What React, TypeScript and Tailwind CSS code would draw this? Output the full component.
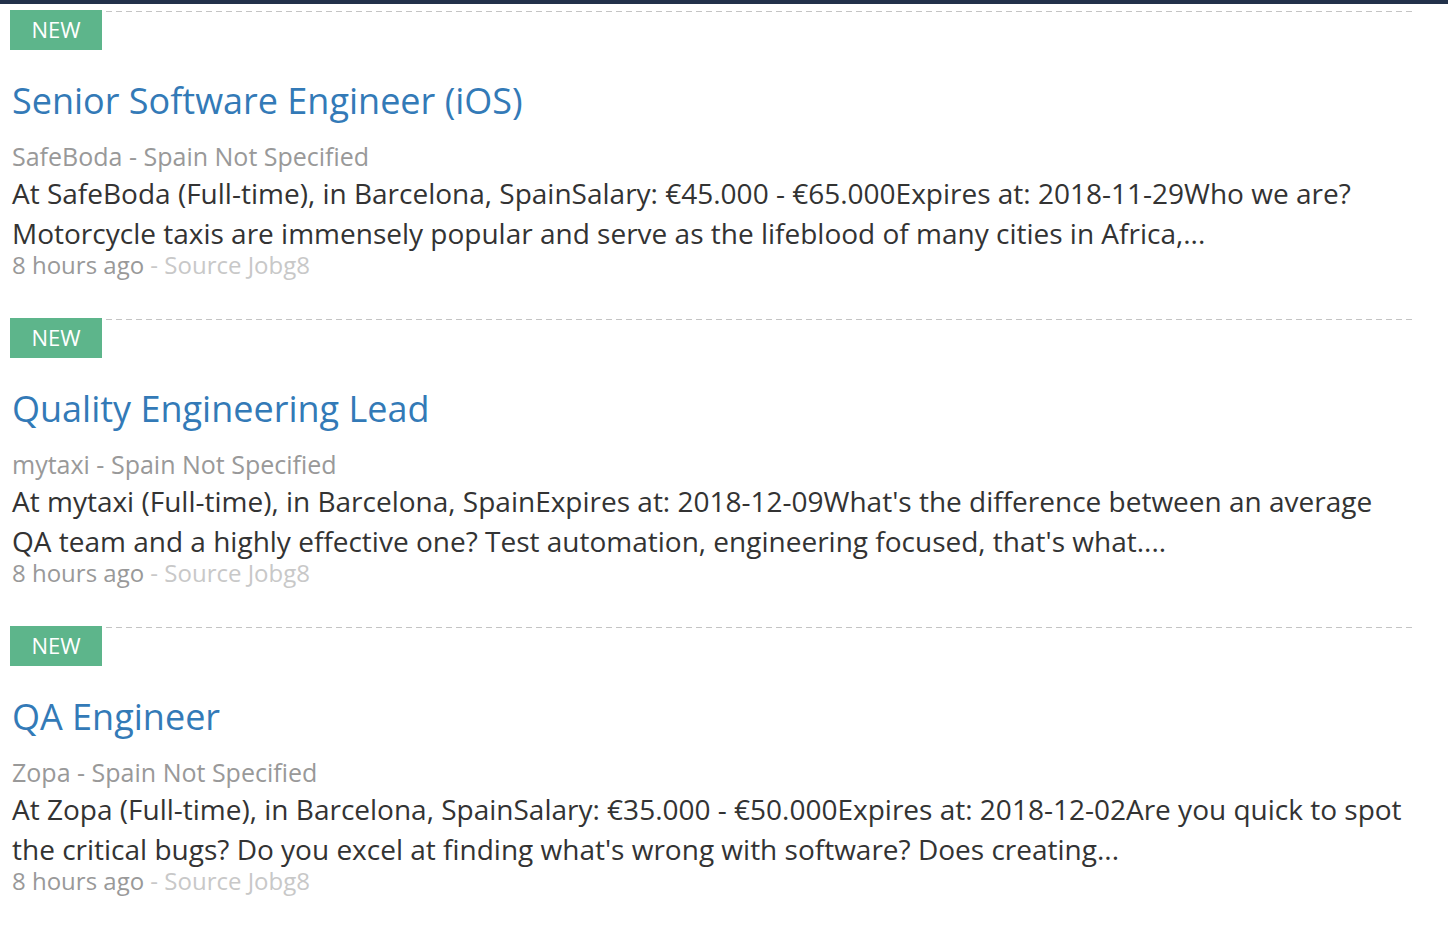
const jobs = [
  {
    title: "Senior Software Engineer (iOS)",
    company: "SafeBoda",
    location: "Spain Not Specified",
    summary:
      "At SafeBoda (Full-time), in Barcelona, SpainSalary: €45.000 - €65.000Expires at: 2018-11-29Who we are? Motorcycle taxis are immensely popular and serve as the lifeblood of many cities in Africa,...",
  },
  {
    title: "Quality Engineering Lead",
    company: "mytaxi",
    location: "Spain Not Specified",
    summary:
      "At mytaxi (Full-time), in Barcelona, SpainExpires at: 2018-12-09What's the difference between an average QA team and a highly effective one? Test automation, engineering focused, that's what....",
  },
  {
    title: "QA Engineer",
    company: "Zopa",
    location: "Spain Not Specified",
    summary:
      "At Zopa (Full-time), in Barcelona, SpainSalary: €35.000 - €50.000Expires at: 2018-12-02Are you quick to spot the critical bugs? Do you excel at finding what's wrong with software? Does creating...",
  },
];

export default function App() {
  return (
    <div className="min-h-[934px] bg-white font-['Open_Sans',sans-serif]">
      <div className="h-[4px] bg-[#22314a]" />
      <div className="w-[1402px] ml-[10px] pt-[6px]">
        {jobs.map((job) => (
          <div key={job.title} className="mb-[41px]">
            <div className="flex items-start">
              <span className="w-[92px] h-[40px] pb-[2px] bg-[#5db58b] text-white text-[22px] flex items-center justify-center">
                NEW
              </span>
              <div className="flex-1 h-px mt-[1px] bg-[repeating-linear-gradient(to_right,transparent_0_4px,#c4c4c4_4px_10px)]" />
            </div>
            <div className="pl-[2px]">
              <h2 className="mt-[29px] text-[36px] leading-[44px] text-[#337ab7]">
                <a href="#">{job.title}</a>
              </h2>
              <div className="mt-[17px] text-[25px] leading-[32px] text-[#999]">
                {job.company} - {job.location}
              </div>
              <p className="mt-[1px] text-[28px] leading-[40px] text-[#333]">
                {job.summary}
              </p>
              <div className="text-[24px] leading-[24px] text-[#999]">
                8 hours ago <span className="text-[#c8c8c8]">- Source Jobg8</span>
              </div>
            </div>
          </div>
        ))}
      </div>
    </div>
  );
}
